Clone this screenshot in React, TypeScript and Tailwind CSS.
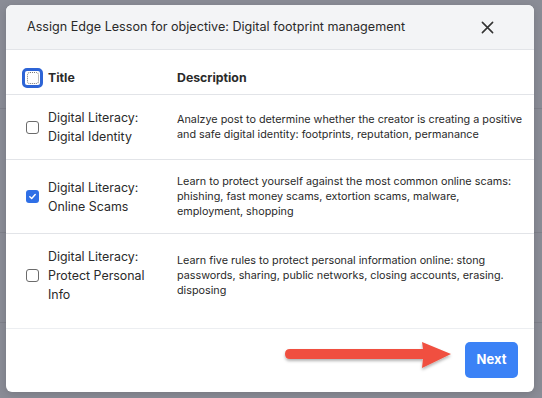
import React from "react";

const font = { fontFamily: "Inter, 'Noto Sans', sans-serif" };

function Box({ checked = false }: { checked?: boolean }) {
  if (checked) {
    return (
      <div className="w-[13px] h-[13px] rounded-[3px] bg-[#2f6fe6] flex items-center justify-center shrink-0">
        <svg width="9" height="9" viewBox="0 0 10 10">
          <path d="M2 5.2 L4.1 7.2 L8 2.8" fill="none" stroke="white" strokeWidth="1.6" strokeLinecap="round" strokeLinejoin="round" />
        </svg>
      </div>
    );
  }
  return <div className="w-[13px] h-[13px] rounded-[3px] border border-[#6b6b6b] bg-white shrink-0" />;
}

const rows = [
  {
    checked: false,
    title: ["Digital Literacy:", "Digital Identity"],
    desc: [
      "Analzye post to determine whether the creator is creating a positive",
      "and safe digital identity: footprints, reputation, permanance",
    ],
  },
  {
    checked: true,
    title: ["Digital Literacy:", "Online Scams"],
    desc: [
      "Learn to protect yourself against the most common online scams:",
      "phishing, fast money scams, extortion scams, malware,",
      "employment, shopping",
    ],
  },
  {
    checked: false,
    title: ["Digital Literacy:", "Protect Personal", "Info"],
    desc: [
      "Learn five rules to protect personal information online: stong",
      "passwords, sharing, public networks, closing accounts, erasing.",
      "disposing",
    ],
    last: true,
  },
];

export default function App() {
  return (
    <div className="relative w-[542px] h-[398px] overflow-hidden bg-[#8a8c96] pt-[5px] pl-[6px]" style={font}>
      {/* faint background lines */}
      <div className="absolute left-0 top-[108px] w-[6px] h-px bg-[#7f818b]" />
      <div className="absolute right-0 top-[108px] w-[8px] h-px bg-[#7f818b]" />
      <div className="absolute left-0 top-[232px] w-[6px] h-px bg-[#7f818b]" />
      <div className="absolute right-0 top-[232px] w-[8px] h-px bg-[#7f818b]" />
      <div className="absolute left-0 top-[322px] w-[6px] h-px bg-[#7f818b]" />
      <div className="absolute right-0 top-[322px] w-[8px] h-px bg-[#7f818b]" />

      <div className="relative w-[528px] h-[387px] bg-white rounded-[6px] flex flex-col overflow-hidden shadow-[0_2px_8px_rgba(0,0,0,0.15)]">
        {/* header */}
        <div className="h-[45px] shrink-0 bg-[#f3f4f6] border-b border-[#e2e4e8] flex items-center justify-between pl-[21px] pr-[40px]">
          <span className="text-[12.6px] text-[#2a2a2a]">
            Assign Edge Lesson for objective: Digital footprint management
          </span>
          <svg width="13" height="13" viewBox="0 0 14 14">
            <path d="M1.5 1.5 L12.5 12.5 M12.5 1.5 L1.5 12.5" stroke="#333" strokeWidth="1.7" strokeLinecap="round" />
          </svg>
        </div>

        {/* body */}
        <div className="flex-1 pt-[12px]">
          <div className="h-[33px] border-b border-[#e2e4e8] flex items-center pl-[16px]">
            <div className="w-[21px] h-[20px] flex items-center justify-center rounded-[5px] border-[3px] border-[#2d64d6] shrink-0">
              <div className="w-[12px] h-[12px] rounded-[3px] border border-dotted border-[#777]" />
            </div>
            <span className="ml-[5px] w-[129px] text-[12.3px] font-bold text-[#2a2a2a]">Title</span>
            <span className="text-[12.3px] font-bold text-[#2a2a2a]">Description</span>
          </div>

          {rows.map((r, i) => (
            <div
              key={i}
              className={`flex items-center pl-[20px] ${r.last ? "" : "border-b border-[#e2e4e8]"}`}
            >
              <Box checked={r.checked} />
              <div className="ml-[9px] w-[129px] py-[13px] text-[12.4px] leading-[19px] text-[#2a2a2a]">
                {r.title.map((t, j) => (
                  <div key={j} className="whitespace-nowrap">{t}</div>
                ))}
              </div>
              <div className="py-[14px] text-[10.8px] leading-[15px] text-[#2a2a2a]">
                {r.desc.map((t, j) => (
                  <div key={j} className="whitespace-nowrap">{t}</div>
                ))}
              </div>
            </div>
          ))}
        </div>

        {/* footer */}
        <div className="h-[64px] shrink-0 border-t border-[#eceef1] flex items-start justify-end pt-[13px] pr-[16px]">
          <button className="w-[53px] h-[36px] rounded-[5px] bg-[#3b82f6] text-white text-[13px] font-bold">
            Next
          </button>
        </div>
      </div>

      {/* annotation arrow */}
      <svg className="absolute left-[280px] top-[336px]" width="180" height="42" viewBox="0 0 180 42">
        <defs>
          <filter id="sh" x="-10%" y="-30%" width="120%" height="160%">
            <feDropShadow dx="0" dy="2" stdDeviation="1.5" floodColor="#000" floodOpacity="0.3" />
          </filter>
        </defs>
        <g filter="url(#sh)">
          <path d="M10 13 L143 13 L142 6 L171 18 L142 32 L143 23 L10 23 Q5 23 5 18 Q5 13 10 13 Z" fill="#f0503f" />
        </g>
      </svg>
    </div>
  );
}
